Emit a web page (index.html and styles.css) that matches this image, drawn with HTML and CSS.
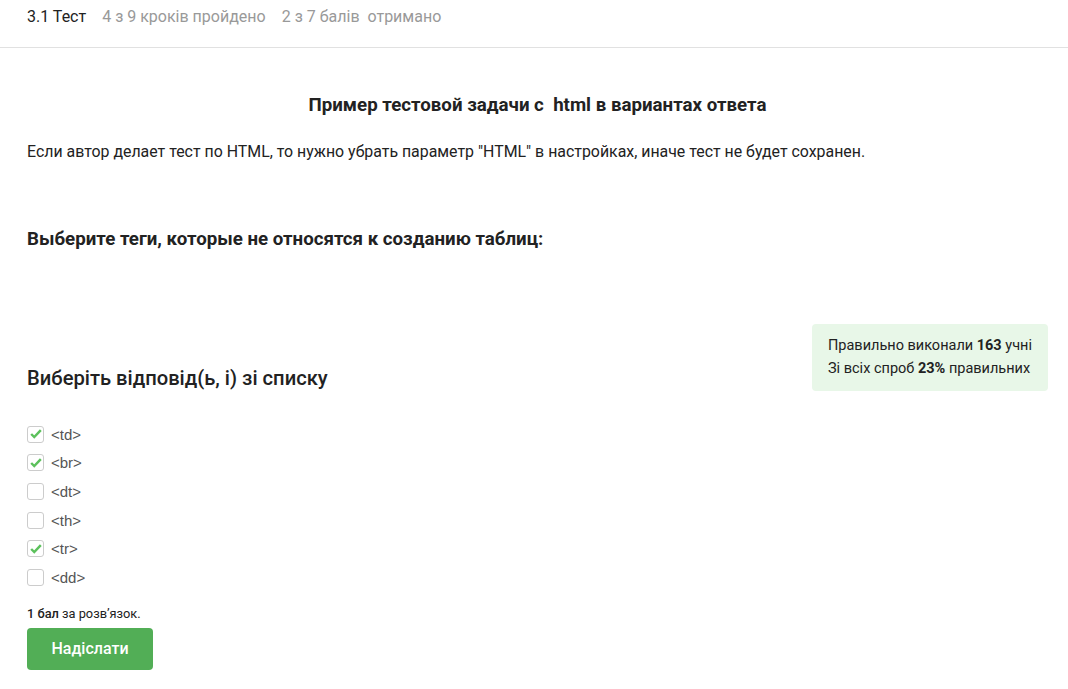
FILE: index.html
```html
<!DOCTYPE html>
<html lang="uk">
<head>
<meta charset="utf-8">
<title>3.1 Тест</title>
<link rel="stylesheet" href="styles.css">
</head>
<body>
<header class="topbar">
  <span class="step-title">3.1 Тест</span>
  <span class="step-meta">4 з 9 кроків пройдено</span>
  <span class="step-meta">2 з 7 балів&nbsp; отримано</span>
</header>
<main class="content">
  <h2 class="task-title">Пример тестовой задачи с&nbsp; html в вариантах ответа</h2>
  <p class="task-text">Если автор делает тест по HTML, то нужно убрать параметр "HTML" в настройках, иначе тест не будет сохранен.</p>
  <p class="task-question">Выберите теги, которые не относятся к созданию таблиц:</p>
  <div class="answer-head">
    <h3 class="answer-title">Виберіть відповід(ь, і) зі списку</h3>
    <div class="stats">
      <div>Правильно виконали <b>163</b> учні</div>
      <div>Зі всіх спроб <b>23%</b> правильних</div>
    </div>
  </div>
  <ul class="options">
    <li class="option"><span class="box checked"><svg viewBox="0 0 16 16"><path d="M2.5 8l3.5 3.5L13.5 3.5"/></svg></span>&lt;td&gt;</li>
    <li class="option"><span class="box checked"><svg viewBox="0 0 16 16"><path d="M2.5 8l3.5 3.5L13.5 3.5"/></svg></span>&lt;br&gt;</li>
    <li class="option"><span class="box"></span>&lt;dt&gt;</li>
    <li class="option"><span class="box"></span>&lt;th&gt;</li>
    <li class="option"><span class="box checked"><svg viewBox="0 0 16 16"><path d="M2.5 8l3.5 3.5L13.5 3.5"/></svg></span>&lt;tr&gt;</li>
    <li class="option"><span class="box"></span>&lt;dd&gt;</li>
  </ul>
  <p class="score"><b>1 бал</b> за розв’язок.</p>
  <button class="submit">Надіслати</button>
</main>
</body>
</html>
```
FILE: styles.css
```css
* { box-sizing: border-box; }
html, body { margin: 0; padding: 0; background: #fff; }
body { font-family: Roboto, "Noto Sans", sans-serif; color: #222; }
.topbar {
  height: 48px;
  border-bottom: 1px solid #e1e1e1;
  display: flex;
  align-items: center;
  gap: 16px;
  padding: 0 27px 14px;
  font-size: 16px;
}
.step-title { color: #222; }
.step-meta { color: #999; }
.content { padding: 0 20px 0 27px; }
.task-title {
  margin: 45px 0 0;
  text-align: center;
  font-size: 18.7px;
  font-weight: 700;
  line-height: 24px;
}
.task-text { margin: 24px 0 0; font-size: 15.9px; line-height: 22px; }
.task-question { margin: 64px 0 0; font-size: 18.7px; font-weight: 700; line-height: 24px; }
.answer-head {
  display: flex;
  justify-content: space-between;
  align-items: flex-start;
  margin-top: 73px;
}
.answer-title { margin: 42px 0 0; font-size: 20.2px; font-weight: 500; line-height: 24px; }
.stats {
  background: #e8f7e8;
  border-radius: 4px;
  width: 236px;
  height: 67px;
  padding: 10px 16px;
  font-size: 14.5px;
  line-height: 23px;
}
.options { list-style: none; margin: 29px 0 0; padding: 0; }
.option {
  display: flex;
  align-items: center;
  gap: 7px;
  height: 28.6px;
  font-family: "Liberation Sans", Arial, sans-serif;
  font-size: 15px;
  color: #555;
}
.box {
  width: 17px; height: 17px;
  border: 1px solid #ccc;
  border-radius: 3px;
  display: inline-flex;
  align-items: center;
  justify-content: center;
}
.box svg { width: 14px; height: 14px; fill: none; stroke: #5cc15c; stroke-width: 2.8; }
.score { margin: 14px 0 0; font-size: 12.8px; color: #222; }
.score b { font-weight: 500; }
.submit {
  display: block;
  margin-top: 7px;
  width: 126px; height: 42px;
  background: #52ae56;
  color: #fff;
  border: none;
  border-radius: 4px;
  font-family: inherit;
  font-size: 16px;
  font-weight: 500;
}
```
